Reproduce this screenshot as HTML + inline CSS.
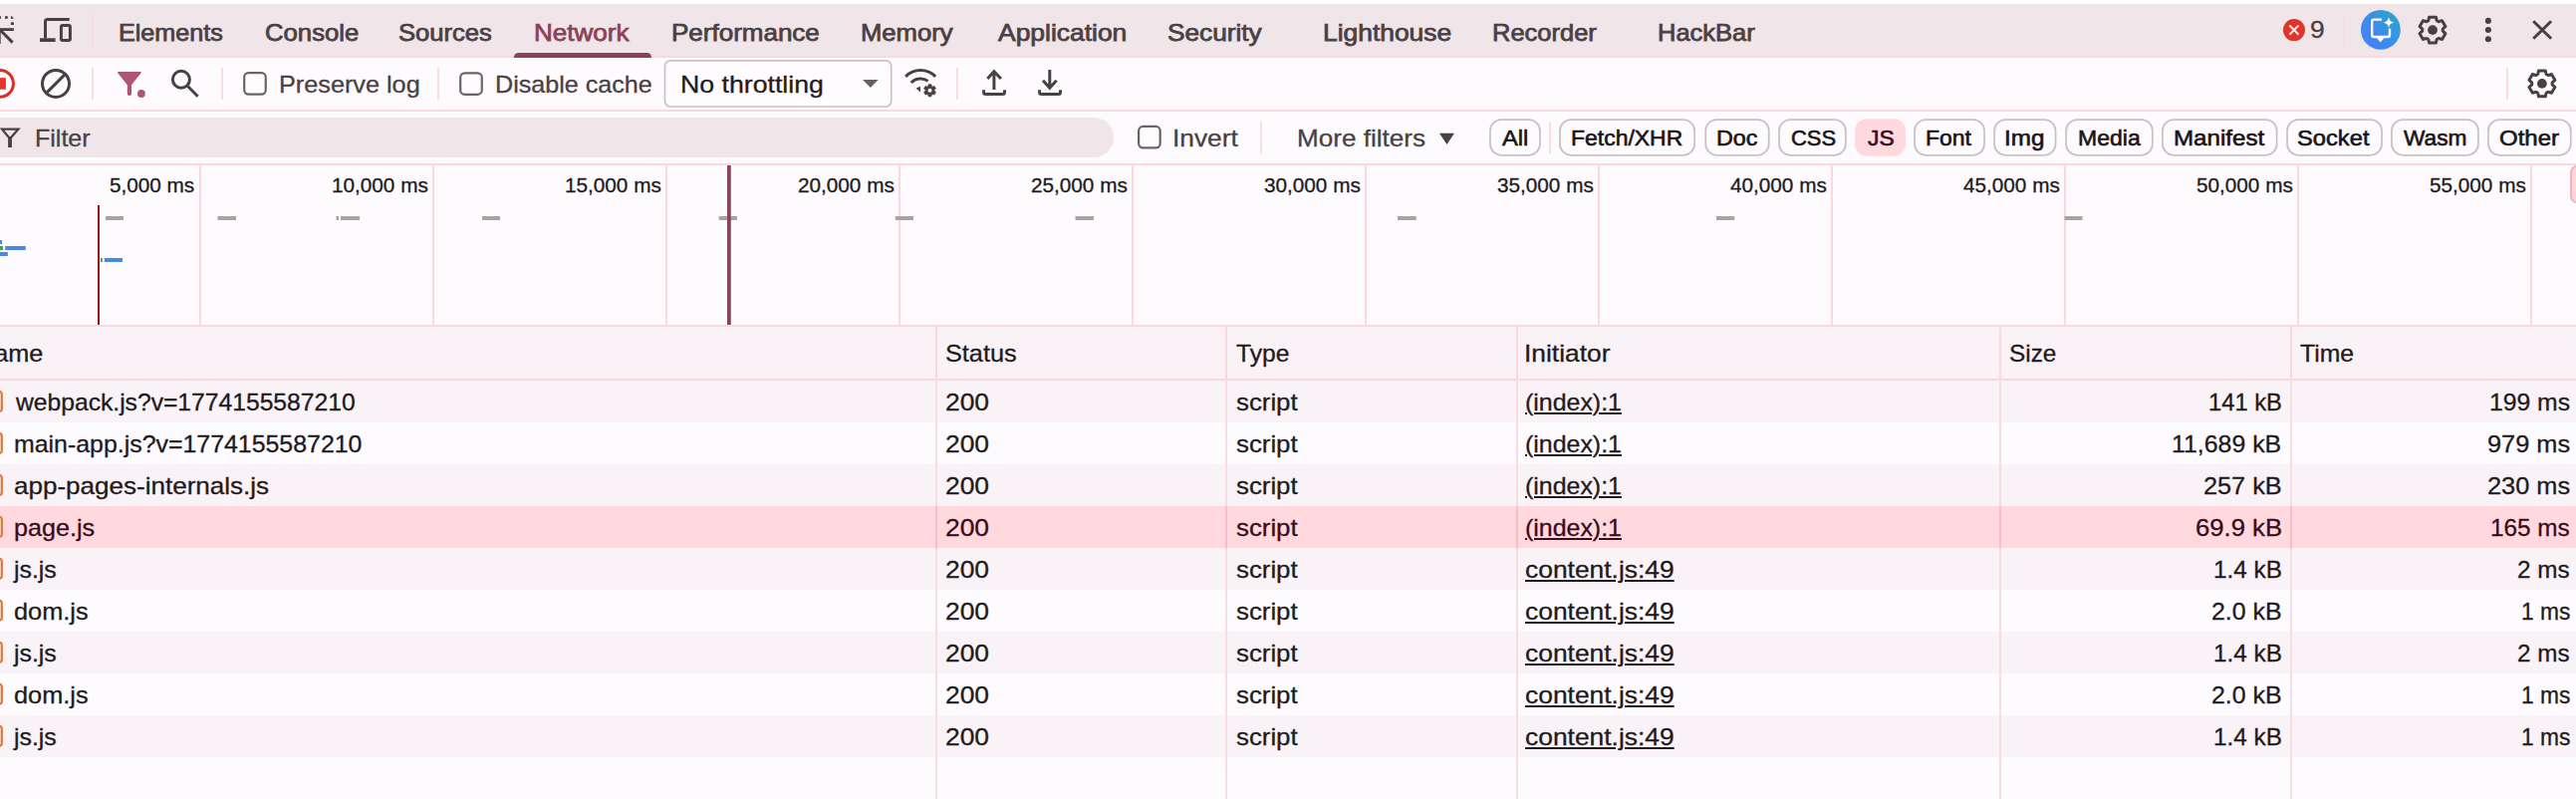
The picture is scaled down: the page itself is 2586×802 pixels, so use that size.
<!DOCTYPE html><html><head><meta charset="utf-8"><title>DevTools</title><style>
html,body{margin:0;padding:0;background:#fefbfe;}body{width:2586px;height:802px;overflow:hidden;position:relative;background:#fefbfe;font-family:"Liberation Sans",sans-serif;}
.a{position:absolute;}.t{position:absolute;white-space:pre;line-height:30px;height:30px;-webkit-text-stroke:0.3px currentColor;}
.med{-webkit-text-stroke:0.75px currentColor;}.med2{-webkit-text-stroke:0.6px currentColor;}
.v{position:absolute;width:2px;background:#fbd7e0;}
.h{position:absolute;left:0;width:2586px;height:2px;background:#fbd7e0;}
.pill{position:absolute;top:119.2px;height:33.7px;border:1.9px solid #c9bfc3;border-radius:12px;box-sizing:content-box;}
.cb{position:absolute;width:19.5px;height:19.5px;border:2px solid #6e6568;border-radius:5px;background:#fefbfe;}
svg{position:absolute;overflow:visible;}
</style></head><body>
<div class="a" style="left:0;top:0;width:2586px;height:4px;background:#fff"></div>
<div class="a" style="left:0;top:4px;width:2586px;height:52px;background:#f0e5e8"></div>
<div class="h" style="top:56px"></div>
<div class="h" style="top:110px"></div>
<div class="h" style="top:164px"></div>
<div class="a" style="left:-30px;top:118px;width:1147.5px;height:40px;border-radius:20px;background:#f0e5e8"></div>
<div class="a" style="left:0;top:328px;width:2586px;height:54px;background:#f9f2f7"></div>
<div class="a" style="left:0;top:382.0px;width:2586px;height:42px;background:#f9f2f7"></div>
<div class="a" style="left:0;top:424.0px;width:2586px;height:42px;background:#fefbfe"></div>
<div class="a" style="left:0;top:466.0px;width:2586px;height:42px;background:#f9f2f7"></div>
<div class="a" style="left:0;top:508.0px;width:2586px;height:42px;background:#ffd9de"></div>
<div class="a" style="left:0;top:550.0px;width:2586px;height:42px;background:#f9f2f7"></div>
<div class="a" style="left:0;top:592.0px;width:2586px;height:42px;background:#fefbfe"></div>
<div class="a" style="left:0;top:634.0px;width:2586px;height:42px;background:#f9f2f7"></div>
<div class="a" style="left:0;top:676.0px;width:2586px;height:42px;background:#fefbfe"></div>
<div class="a" style="left:0;top:718.0px;width:2586px;height:42px;background:#f9f2f7"></div>
<div class="h" style="top:326px"></div>
<div class="h" style="top:380px"></div>
<div class="v" style="left:200px;top:166px;height:160px"></div>
<div class="v" style="left:434px;top:166px;height:160px"></div>
<div class="v" style="left:668px;top:166px;height:160px"></div>
<div class="v" style="left:902px;top:166px;height:160px"></div>
<div class="v" style="left:1136px;top:166px;height:160px"></div>
<div class="v" style="left:1370px;top:166px;height:160px"></div>
<div class="v" style="left:1604px;top:166px;height:160px"></div>
<div class="v" style="left:1838px;top:166px;height:160px"></div>
<div class="v" style="left:2072px;top:166px;height:160px"></div>
<div class="v" style="left:2306px;top:166px;height:160px"></div>
<div class="v" style="left:2540px;top:166px;height:160px"></div>
<div class="v" style="left:939.0px;top:328px;height:474px;background:#f8dce4"></div>
<div class="v" style="left:939.0px;top:328px;height:52px;background:#fad6de"></div>
<div class="v" style="left:939.0px;top:508.0px;height:42px;background:#f7bcc8"></div>
<div class="v" style="left:1230.0px;top:328px;height:474px;background:#f8dce4"></div>
<div class="v" style="left:1230.0px;top:328px;height:52px;background:#fad6de"></div>
<div class="v" style="left:1230.0px;top:508.0px;height:42px;background:#f7bcc8"></div>
<div class="v" style="left:1522.0px;top:328px;height:474px;background:#f8dce4"></div>
<div class="v" style="left:1522.0px;top:328px;height:52px;background:#fad6de"></div>
<div class="v" style="left:1522.0px;top:508.0px;height:42px;background:#f7bcc8"></div>
<div class="v" style="left:2007.0px;top:328px;height:474px;background:#f8dce4"></div>
<div class="v" style="left:2007.0px;top:328px;height:52px;background:#fad6de"></div>
<div class="v" style="left:2007.0px;top:508.0px;height:42px;background:#f7bcc8"></div>
<div class="v" style="left:2299.0px;top:328px;height:474px;background:#f8dce4"></div>
<div class="v" style="left:2299.0px;top:328px;height:52px;background:#fad6de"></div>
<div class="v" style="left:2299.0px;top:508.0px;height:42px;background:#f7bcc8"></div>
<div class="v" style="left:92.0px;top:68.0px;height:32.0px;background:#fcdbe3"></div>
<div class="v" style="left:222.0px;top:68.0px;height:32.0px;background:#fcdbe3"></div>
<div class="v" style="left:439.0px;top:68.0px;height:32.0px;background:#fcdbe3"></div>
<div class="v" style="left:960.0px;top:68.0px;height:32.0px;background:#fcdbe3"></div>
<div class="v" style="left:2516.0px;top:68.0px;height:32.0px;background:#fcdbe3"></div>
<div class="v" style="left:1265.0px;top:122.0px;height:32.0px;background:#fcdbe3"></div>
<div class="v" style="left:1555.0px;top:122.0px;height:32.0px;background:#fcdbe3"></div>
<div class="v" style="left:92.0px;top:14.0px;height:32.0px;background:#f6dce3"></div>
<div class="v" style="left:2352.0px;top:16.0px;height:29.0px;background:#f6dce3"></div>
<div class="a" style="left:516px;top:53.1px;width:137.8px;height:4.9px;border-radius:4.5px 4.5px 0 0;background:#8b4259"></div>
<svg width="2586" height="802" viewBox="0 0 2586 802" style="left:0;top:0">
<rect x="1495.95" y="120.15" width="50.00" height="35.60" rx="11.2" fill="none" stroke="#cbc1c5" stroke-width="1.75"/>
<rect x="1565.95" y="120.15" width="135.20" height="35.60" rx="11.2" fill="none" stroke="#cbc1c5" stroke-width="1.75"/>
<rect x="1712.25" y="120.15" width="63.50" height="35.60" rx="11.2" fill="none" stroke="#cbc1c5" stroke-width="1.75"/>
<rect x="1786.05" y="120.15" width="66.80" height="35.60" rx="11.2" fill="none" stroke="#cbc1c5" stroke-width="1.75"/>
<rect x="1862.00" y="119.20" width="51.00" height="37.50" rx="12" fill="#ffd9de"/>
<rect x="1922.05" y="120.15" width="70.00" height="35.60" rx="11.2" fill="none" stroke="#cbc1c5" stroke-width="1.75"/>
<rect x="2002.15" y="120.15" width="61.40" height="35.60" rx="11.2" fill="none" stroke="#cbc1c5" stroke-width="1.75"/>
<rect x="2074.15" y="120.15" width="86.70" height="35.60" rx="11.2" fill="none" stroke="#cbc1c5" stroke-width="1.75"/>
<rect x="2170.95" y="120.15" width="114.70" height="35.60" rx="11.2" fill="none" stroke="#cbc1c5" stroke-width="1.75"/>
<rect x="2296.05" y="120.15" width="95.00" height="35.60" rx="11.2" fill="none" stroke="#cbc1c5" stroke-width="1.75"/>
<rect x="2400.95" y="120.15" width="87.00" height="35.60" rx="11.2" fill="none" stroke="#cbc1c5" stroke-width="1.75"/>
<rect x="2497.95" y="120.15" width="82.80" height="35.60" rx="11.2" fill="none" stroke="#cbc1c5" stroke-width="1.75"/>
<rect x="245.20" y="73.10" width="21.55" height="21.55" rx="4.4" fill="#fefcfe" stroke="#6b6467" stroke-width="2.2"/>
<rect x="462.20" y="73.30" width="21.55" height="21.55" rx="4.4" fill="#fefcfe" stroke="#6b6467" stroke-width="2.2"/>
<rect x="1143.10" y="126.90" width="21.55" height="21.55" rx="4.4" fill="#fefcfe" stroke="#6b6467" stroke-width="2.2"/>
<rect x="667.5" y="60.8" width="227.2" height="46.2" rx="5.5" fill="#fefcfe" stroke="#cdbfc4" stroke-width="1.7"/>
</svg>
<div class="t med2" style="left:1508.10px;top:124.0px;font-size:22.5px;transform-origin:0 50%;transform:scaleX(1.0539);color:#1a1416">All</div>
<div class="t med2" style="left:1577.38px;top:124.0px;font-size:22.5px;transform-origin:0 50%;transform:scaleX(1.0204);color:#1a1416">Fetch/XHR</div>
<div class="t med2" style="left:1723.26px;top:124.0px;font-size:22.5px;transform-origin:0 50%;transform:scaleX(1.0371);color:#1a1416">Doc</div>
<div class="t med2" style="left:1797.52px;top:124.0px;font-size:22.5px;transform-origin:0 50%;transform:scaleX(0.9761);color:#1a1416">CSS</div>
<div class="t med2" style="left:1875.20px;top:124.0px;font-size:22.5px;transform-origin:0 50%;transform:scaleX(1.0139);color:#3b0a1c">JS</div>
<div class="t med2" style="left:1933.28px;top:124.0px;font-size:22.5px;transform-origin:0 50%;transform:scaleX(1.0208);color:#1a1416">Font</div>
<div class="t med2" style="left:2012.25px;top:124.0px;font-size:22.5px;transform-origin:0 50%;transform:scaleX(1.0773);color:#1a1416">Img</div>
<div class="t med2" style="left:2085.68px;top:124.0px;font-size:22.5px;transform-origin:0 50%;transform:scaleX(1.0236);color:#1a1416">Media</div>
<div class="t med2" style="left:2181.93px;top:124.0px;font-size:22.5px;transform-origin:0 50%;transform:scaleX(1.0733);color:#1a1416">Manifest</div>
<div class="t med2" style="left:2306.25px;top:124.0px;font-size:22.5px;transform-origin:0 50%;transform:scaleX(1.0535);color:#1a1416">Socket</div>
<div class="t med2" style="left:2413.20px;top:124.0px;font-size:22.5px;transform-origin:0 50%;transform:scaleX(1.0102);color:#1a1416">Wasm</div>
<div class="t med2" style="left:2508.53px;top:124.0px;font-size:22.5px;transform-origin:0 50%;transform:scaleX(1.0667);color:#1a1416">Other</div>
<div class="a" style="left:2580px;top:166px;width:14px;height:34px;border-radius:7px;background:#ffd6dc;border:2px solid #f9b0bd"></div>
<div class="t med" style="font-size:23.2px;color:#4a4044;left:118.82px;top:18.00px;transform-origin:0 50%;transform:scaleX(1.0846);">Elements</div>
<div class="t med" style="font-size:23.2px;color:#4a4044;left:265.69px;top:18.00px;transform-origin:0 50%;transform:scaleX(1.1085);">Console</div>
<div class="t med" style="font-size:23.2px;color:#4a4044;left:399.90px;top:18.00px;transform-origin:0 50%;transform:scaleX(1.1022);">Sources</div>
<div class="t med" style="font-size:23.2px;color:#4a4044;left:674.18px;top:18.00px;transform-origin:0 50%;transform:scaleX(1.1212);">Performance</div>
<div class="t med" style="font-size:23.2px;color:#4a4044;left:864.30px;top:18.00px;transform-origin:0 50%;transform:scaleX(1.1041);">Memory</div>
<div class="t med" style="font-size:23.2px;color:#4a4044;left:1001.50px;top:18.00px;transform-origin:0 50%;transform:scaleX(1.1400);">Application</div>
<div class="t med" style="font-size:23.2px;color:#4a4044;left:1171.87px;top:18.00px;transform-origin:0 50%;transform:scaleX(1.1303);">Security</div>
<div class="t med" style="font-size:23.2px;color:#4a4044;left:1327.86px;top:18.00px;transform-origin:0 50%;transform:scaleX(1.1384);">Lighthouse</div>
<div class="t med" style="font-size:23.2px;color:#4a4044;left:1497.90px;top:18.00px;transform-origin:0 50%;transform:scaleX(1.0989);">Recorder</div>
<div class="t med" style="font-size:23.2px;color:#4a4044;left:1663.50px;top:18.00px;transform-origin:0 50%;transform:scaleX(1.0988);">HackBar</div>
<div class="t med" style="font-size:23.2px;color:#8b4259;left:536.28px;top:18.00px;transform-origin:0 50%;transform:scaleX(1.1226);">Network</div>
<div class="t " style="font-size:24px;color:#4a4044;left:2318.90px;top:15.00px;transform-origin:0 50%;transform:scaleX(1.1000);">9</div>
<div class="t " style="font-size:24px;color:#4a4044;left:279.75px;top:70.00px;transform-origin:0 50%;transform:scaleX(1.0515);">Preserve log</div>
<div class="t " style="font-size:24px;color:#4a4044;left:497.25px;top:70.00px;transform-origin:0 50%;transform:scaleX(1.0462);">Disable cache</div>
<div class="t " style="font-size:24px;color:#1f1a1c;left:683.49px;top:70.00px;transform-origin:0 50%;transform:scaleX(1.1114);">No throttling</div>
<div class="t " style="font-size:24px;color:#4a4044;left:34.96px;top:124.00px;transform-origin:0 50%;transform:scaleX(1.0432);">Filter</div>
<div class="t " style="font-size:24px;color:#4a4044;left:1176.56px;top:124.00px;transform-origin:0 50%;transform:scaleX(1.0967);">Invert</div>
<div class="t " style="font-size:24px;color:#4a4044;left:1301.91px;top:124.00px;transform-origin:0 50%;transform:scaleX(1.0876);">More filters</div>
<div class="t " style="font-size:20px;color:#1f1a1c;left:110.17px;top:171.00px;transform-origin:0 50%;transform:scaleX(1.0360);">5,000 ms</div>
<div class="t " style="font-size:20px;color:#1f1a1c;left:332.65px;top:171.00px;transform-origin:0 50%;transform:scaleX(1.0360);">10,000 ms</div>
<div class="t " style="font-size:20px;color:#1f1a1c;left:566.65px;top:171.00px;transform-origin:0 50%;transform:scaleX(1.0360);">15,000 ms</div>
<div class="t " style="font-size:20px;color:#1f1a1c;left:800.65px;top:171.00px;transform-origin:0 50%;transform:scaleX(1.0360);">20,000 ms</div>
<div class="t " style="font-size:20px;color:#1f1a1c;left:1034.65px;top:171.00px;transform-origin:0 50%;transform:scaleX(1.0360);">25,000 ms</div>
<div class="t " style="font-size:20px;color:#1f1a1c;left:1268.65px;top:171.00px;transform-origin:0 50%;transform:scaleX(1.0360);">30,000 ms</div>
<div class="t " style="font-size:20px;color:#1f1a1c;left:1502.65px;top:171.00px;transform-origin:0 50%;transform:scaleX(1.0360);">35,000 ms</div>
<div class="t " style="font-size:20px;color:#1f1a1c;left:1736.65px;top:171.00px;transform-origin:0 50%;transform:scaleX(1.0360);">40,000 ms</div>
<div class="t " style="font-size:20px;color:#1f1a1c;left:1970.65px;top:171.00px;transform-origin:0 50%;transform:scaleX(1.0360);">45,000 ms</div>
<div class="t " style="font-size:20px;color:#1f1a1c;left:2204.65px;top:171.00px;transform-origin:0 50%;transform:scaleX(1.0360);">50,000 ms</div>
<div class="t " style="font-size:20px;color:#1f1a1c;left:2438.65px;top:171.00px;transform-origin:0 50%;transform:scaleX(1.0360);">55,000 ms</div>
<div class="t " style="font-size:24px;color:#1f1a1c;left:-24.05px;top:340.00px;transform-origin:0 50%;transform:scaleX(1.0531);">Name</div>
<div class="t " style="font-size:24px;color:#1f1a1c;left:948.95px;top:340.00px;transform-origin:0 50%;transform:scaleX(1.0516);">Status</div>
<div class="t " style="font-size:24px;color:#1f1a1c;left:1241.00px;top:340.00px;transform-origin:0 50%;transform:scaleX(1.0255);">Type</div>
<div class="t " style="font-size:24px;color:#1f1a1c;left:1530.30px;top:340.00px;transform-origin:0 50%;transform:scaleX(1.0983);">Initiator</div>
<div class="t " style="font-size:24px;color:#1f1a1c;left:2016.74px;top:340.00px;transform-origin:0 50%;transform:scaleX(1.0146);">Size</div>
<div class="t " style="font-size:24px;color:#1f1a1c;left:2309.00px;top:340.00px;transform-origin:0 50%;transform:scaleX(1.0318);">Time</div>
<div class="t " style="font-size:24px;color:#1f1a1c;left:16.03px;top:389.00px;transform-origin:0 50%;transform:scaleX(1.0271);">webpack.js?v=1774155587210</div>
<div class="t " style="font-size:24px;color:#1f1a1c;left:948.90px;top:389.00px;transform-origin:0 50%;transform:scaleX(1.0983);">200</div>
<div class="t " style="font-size:24px;color:#1f1a1c;left:1241.00px;top:389.00px;transform-origin:0 50%;transform:scaleX(1.0750);">script</div>
<div class="t " style="font-size:24px;color:#1f1a1c;text-decoration:underline;text-decoration-thickness:2px;text-underline-offset:2px;left:1531.46px;top:389.00px;transform-origin:0 50%;transform:scaleX(1.0377);">(index):1</div>
<div class="t " style="font-size:24px;color:#1f1a1c;left:2216.76px;top:389.00px;transform-origin:0 50%;transform:scaleX(0.9882);">141 kB</div>
<div class="t " style="font-size:24px;color:#1f1a1c;left:2498.97px;top:389.00px;transform-origin:0 50%;transform:scaleX(1.0296);">199 ms</div>
<div class="t " style="font-size:24px;color:#1f1a1c;left:13.96px;top:431.00px;transform-origin:0 50%;transform:scaleX(1.0370);">main-app.js?v=1774155587210</div>
<div class="t " style="font-size:24px;color:#1f1a1c;left:948.90px;top:431.00px;transform-origin:0 50%;transform:scaleX(1.0983);">200</div>
<div class="t " style="font-size:24px;color:#1f1a1c;left:1241.00px;top:431.00px;transform-origin:0 50%;transform:scaleX(1.0750);">script</div>
<div class="t " style="font-size:24px;color:#1f1a1c;text-decoration:underline;text-decoration-thickness:2px;text-underline-offset:2px;left:1531.46px;top:431.00px;transform-origin:0 50%;transform:scaleX(1.0377);">(index):1</div>
<div class="t " style="font-size:24px;color:#1f1a1c;left:2180.46px;top:431.00px;transform-origin:0 50%;transform:scaleX(1.0365);">11,689 kB</div>
<div class="t " style="font-size:24px;color:#1f1a1c;left:2496.94px;top:431.00px;transform-origin:0 50%;transform:scaleX(1.0553);">979 ms</div>
<div class="t " style="font-size:24px;color:#1f1a1c;left:13.92px;top:473.00px;transform-origin:0 50%;transform:scaleX(1.0845);">app-pages-internals.js</div>
<div class="t " style="font-size:24px;color:#1f1a1c;left:948.90px;top:473.00px;transform-origin:0 50%;transform:scaleX(1.0983);">200</div>
<div class="t " style="font-size:24px;color:#1f1a1c;left:1241.00px;top:473.00px;transform-origin:0 50%;transform:scaleX(1.0750);">script</div>
<div class="t " style="font-size:24px;color:#1f1a1c;text-decoration:underline;text-decoration-thickness:2px;text-underline-offset:2px;left:1531.46px;top:473.00px;transform-origin:0 50%;transform:scaleX(1.0377);">(index):1</div>
<div class="t " style="font-size:24px;color:#1f1a1c;left:2211.95px;top:473.00px;transform-origin:0 50%;transform:scaleX(1.0535);">257 kB</div>
<div class="t " style="font-size:24px;color:#1f1a1c;left:2496.94px;top:473.00px;transform-origin:0 50%;transform:scaleX(1.0553);">230 ms</div>
<div class="t " style="font-size:24px;color:#3b0a1c;left:13.95px;top:515.00px;transform-origin:0 50%;transform:scaleX(1.0472);">page.js</div>
<div class="t " style="font-size:24px;color:#3b0a1c;left:948.90px;top:515.00px;transform-origin:0 50%;transform:scaleX(1.0983);">200</div>
<div class="t " style="font-size:24px;color:#3b0a1c;left:1241.00px;top:515.00px;transform-origin:0 50%;transform:scaleX(1.0750);">script</div>
<div class="t " style="font-size:24px;color:#3b0a1c;text-decoration:underline;text-decoration-thickness:2px;text-underline-offset:2px;left:1531.46px;top:515.00px;transform-origin:0 50%;transform:scaleX(1.0377);">(index):1</div>
<div class="t " style="font-size:24px;color:#3b0a1c;left:2203.63px;top:515.00px;transform-origin:0 50%;transform:scaleX(1.0696);">69.9 kB</div>
<div class="t " style="font-size:24px;color:#3b0a1c;left:2500.29px;top:515.00px;transform-origin:0 50%;transform:scaleX(1.0128);">165 ms</div>
<div class="t " style="font-size:24px;color:#1f1a1c;left:14.43px;top:557.00px;transform-origin:0 50%;transform:scaleX(1.0347);">js.js</div>
<div class="t " style="font-size:24px;color:#1f1a1c;left:948.90px;top:557.00px;transform-origin:0 50%;transform:scaleX(1.0983);">200</div>
<div class="t " style="font-size:24px;color:#1f1a1c;left:1241.00px;top:557.00px;transform-origin:0 50%;transform:scaleX(1.0750);">script</div>
<div class="t " style="font-size:24px;color:#1f1a1c;text-decoration:underline;text-decoration-thickness:2px;text-underline-offset:2px;left:1531.40px;top:557.00px;transform-origin:0 50%;transform:scaleX(1.1002);">content.js:49</div>
<div class="t " style="font-size:24px;color:#1f1a1c;left:2221.79px;top:557.00px;transform-origin:0 50%;transform:scaleX(1.0116);">1.4 kB</div>
<div class="t " style="font-size:24px;color:#1f1a1c;left:2527.49px;top:557.00px;transform-origin:0 50%;transform:scaleX(1.0096);">2 ms</div>
<div class="t " style="font-size:24px;color:#1f1a1c;left:13.85px;top:599.00px;transform-origin:0 50%;transform:scaleX(1.0547);">dom.js</div>
<div class="t " style="font-size:24px;color:#1f1a1c;left:948.90px;top:599.00px;transform-origin:0 50%;transform:scaleX(1.0983);">200</div>
<div class="t " style="font-size:24px;color:#1f1a1c;left:1241.00px;top:599.00px;transform-origin:0 50%;transform:scaleX(1.0750);">script</div>
<div class="t " style="font-size:24px;color:#1f1a1c;text-decoration:underline;text-decoration-thickness:2px;text-underline-offset:2px;left:1531.40px;top:599.00px;transform-origin:0 50%;transform:scaleX(1.1002);">content.js:49</div>
<div class="t " style="font-size:24px;color:#1f1a1c;left:2219.96px;top:599.00px;transform-origin:0 50%;transform:scaleX(1.0389);">2.0 kB</div>
<div class="t " style="font-size:24px;color:#1f1a1c;left:2530.65px;top:599.00px;transform-origin:0 50%;transform:scaleX(0.9489);">1 ms</div>
<div class="t " style="font-size:24px;color:#1f1a1c;left:14.43px;top:641.00px;transform-origin:0 50%;transform:scaleX(1.0347);">js.js</div>
<div class="t " style="font-size:24px;color:#1f1a1c;left:948.90px;top:641.00px;transform-origin:0 50%;transform:scaleX(1.0983);">200</div>
<div class="t " style="font-size:24px;color:#1f1a1c;left:1241.00px;top:641.00px;transform-origin:0 50%;transform:scaleX(1.0750);">script</div>
<div class="t " style="font-size:24px;color:#1f1a1c;text-decoration:underline;text-decoration-thickness:2px;text-underline-offset:2px;left:1531.40px;top:641.00px;transform-origin:0 50%;transform:scaleX(1.1002);">content.js:49</div>
<div class="t " style="font-size:24px;color:#1f1a1c;left:2221.79px;top:641.00px;transform-origin:0 50%;transform:scaleX(1.0116);">1.4 kB</div>
<div class="t " style="font-size:24px;color:#1f1a1c;left:2527.49px;top:641.00px;transform-origin:0 50%;transform:scaleX(1.0096);">2 ms</div>
<div class="t " style="font-size:24px;color:#1f1a1c;left:13.85px;top:683.00px;transform-origin:0 50%;transform:scaleX(1.0547);">dom.js</div>
<div class="t " style="font-size:24px;color:#1f1a1c;left:948.90px;top:683.00px;transform-origin:0 50%;transform:scaleX(1.0983);">200</div>
<div class="t " style="font-size:24px;color:#1f1a1c;left:1241.00px;top:683.00px;transform-origin:0 50%;transform:scaleX(1.0750);">script</div>
<div class="t " style="font-size:24px;color:#1f1a1c;text-decoration:underline;text-decoration-thickness:2px;text-underline-offset:2px;left:1531.40px;top:683.00px;transform-origin:0 50%;transform:scaleX(1.1002);">content.js:49</div>
<div class="t " style="font-size:24px;color:#1f1a1c;left:2219.96px;top:683.00px;transform-origin:0 50%;transform:scaleX(1.0389);">2.0 kB</div>
<div class="t " style="font-size:24px;color:#1f1a1c;left:2530.65px;top:683.00px;transform-origin:0 50%;transform:scaleX(0.9489);">1 ms</div>
<div class="t " style="font-size:24px;color:#1f1a1c;left:14.43px;top:725.00px;transform-origin:0 50%;transform:scaleX(1.0347);">js.js</div>
<div class="t " style="font-size:24px;color:#1f1a1c;left:948.90px;top:725.00px;transform-origin:0 50%;transform:scaleX(1.0983);">200</div>
<div class="t " style="font-size:24px;color:#1f1a1c;left:1241.00px;top:725.00px;transform-origin:0 50%;transform:scaleX(1.0750);">script</div>
<div class="t " style="font-size:24px;color:#1f1a1c;text-decoration:underline;text-decoration-thickness:2px;text-underline-offset:2px;left:1531.40px;top:725.00px;transform-origin:0 50%;transform:scaleX(1.1002);">content.js:49</div>
<div class="t " style="font-size:24px;color:#1f1a1c;left:2221.79px;top:725.00px;transform-origin:0 50%;transform:scaleX(1.0116);">1.4 kB</div>
<div class="t " style="font-size:24px;color:#1f1a1c;left:2530.65px;top:725.00px;transform-origin:0 50%;transform:scaleX(0.9489);">1 ms</div>
<!--ICONS-->
<svg width="2586" height="802" viewBox="0 0 2586 802" style="left:0;top:0">
<g fill="#4a4044">
<rect x="-1" y="16.2" width="2" height="2.6"/><rect x="5" y="16.2" width="2.8" height="2.6"/><path d="M10.9 18.8 L10.9 16.2 L12 16.2 L13.9 18.8 Z"/><rect x="10.9" y="22.3" width="3" height="2.7"/>
<rect x="-2" y="28.2" width="15.9" height="2.8"/><rect x="-2" y="28.2" width="2.7" height="15.8"/>
</g>
<path d="M0 30 L12.6 42.6" stroke="#4a4044" stroke-width="3" fill="none"/>
<path d="M69.7 19.5 L47.5 19.5 Q45.5 19.5 45.5 21.5 L45.5 38.5" stroke="#4a4044" stroke-width="3" fill="none"/>
<rect x="40" y="38.3" width="15.6" height="3.7" fill="#4a4044"/>
<rect x="61.4" y="25.6" width="9" height="14.9" rx="1.5" stroke="#4a4044" stroke-width="3" fill="none"/>
<circle cx="0" cy="83.9" r="13.4" fill="none" stroke="#d93025" stroke-width="3"/><rect x="-6" y="78.1" width="11.9" height="11.6" fill="#e53528"/>
<circle cx="56" cy="83.9" r="13.5" fill="none" stroke="#4a4044" stroke-width="3"/><path d="M46.5 93.4 L65.5 74.4" stroke="#4a4044" stroke-width="3"/>
<path d="M118.6 72 L141.2 72 Q142.3 72.6 141.4 73.6 L132 85.2 L132 94 Q132 96 129.9 96 Q127.8 96 127.8 94 L127.8 85.2 L118.4 73.6 Q117.5 72.6 118.6 72 Z" fill="#ad5571"/><circle cx="141.9" cy="94" r="3.9" fill="#ad5571"/>
<circle cx="181.9" cy="79.8" r="8.5" fill="none" stroke="#4a4044" stroke-width="3"/><path d="M188 86 L198.6 96.8" stroke="#4a4044" stroke-width="3" stroke-linecap="butt"/>
<path d="M909.1 76.9 A 21 21 0 0 1 939.1 76.9" fill="none" stroke="#4a4044" stroke-width="3"/>
<path d="M914.7 83 A 13 13 0 0 1 931.6 81.4" fill="none" stroke="#4a4044" stroke-width="3"/>
<path d="M919.5 88.5 L924 86.8 L924 92.4 Z" fill="#4a4044"/>
<path d="M935.50 87.34 L934.89 84.76 L932.11 84.76 L931.50 87.34 L928.97 86.57 L927.57 88.99 L929.50 90.80 L927.57 92.61 L928.97 95.03 L931.50 94.26 L932.11 96.84 L934.89 96.84 L935.50 94.26 L938.03 95.03 L939.43 92.61 L937.50 90.80 L939.43 88.99 L938.03 86.57 Z" fill="#4a4044" stroke="#4a4044" stroke-width="0.8" stroke-linejoin="round"/><circle cx="933.5" cy="90.8" r="2" fill="#fefbfe"/>
<path d="M997.9 90 L997.9 71.4 M991.3 79 L997.9 71.8 L1004.9 79" fill="none" stroke="#4a4044" stroke-width="3" stroke-linejoin="miter"/>
<path d="M987.5 90.3 L987.5 92.4 Q987.5 94.4 989.5 94.4 L1006.5 94.4 Q1008.5 94.4 1008.5 92.4 L1008.5 90.3" fill="none" stroke="#4a4044" stroke-width="3"/>
<path d="M1053.8 70 L1053.8 88.6 M1047 80.8 L1053.8 88.2 L1060.6 80.8" fill="none" stroke="#4a4044" stroke-width="3" stroke-linejoin="miter"/>
<path d="M1043.5 90.3 L1043.5 92.4 Q1043.5 94.4 1045.5 94.4 L1062.5 94.4 Q1064.5 94.4 1064.5 92.4 L1064.5 90.3" fill="none" stroke="#4a4044" stroke-width="3"/>
<circle cx="2303" cy="30.1" r="11" fill="#e0342b"/><path d="M2298.4 25.5 L2307.6 34.7 M2307.6 25.5 L2298.4 34.7" stroke="#fde6e6" stroke-width="2"/>
<defs><linearGradient id="g1" x1="0" y1="1" x2="1" y2="0"><stop offset="0.3" stop-color="#4285f4"/><stop offset="1" stop-color="#2aa8c4"/></linearGradient></defs>
<circle cx="2389.9" cy="29.9" r="19.9" fill="url(#g1)"/>
<path d="M2391 19.6 L2383.2 19.6 Q2381.2 19.6 2381.2 21.6 L2381.2 35 Q2381.2 37 2383.2 37 L2397 37 Q2399 37 2399 35 L2399 28.8" fill="none" stroke="#fff" stroke-width="2.4" stroke-linejoin="miter"/>
<path d="M2385.5 37.6 L2389.7 42.6 L2393.9 37.6 Z" fill="#fff"/>
<path d="M2398 17.2 Q2398.8 21.8 2403.4 22.6 Q2398.8 23.4 2398 28 Q2397.2 23.4 2392.6 22.6 Q2397.2 21.8 2398 17.2 Z" fill="#fff"/>
<path d="M2446.19 20.69 L2445.38 17.13 L2438.62 17.13 L2437.81 20.69 L2435.95 21.77 L2432.46 20.69 L2429.08 26.54 L2431.76 29.02 L2431.76 31.18 L2429.08 33.66 L2432.46 39.51 L2435.95 38.43 L2437.81 39.51 L2438.62 43.07 L2445.38 43.07 L2446.19 39.51 L2448.05 38.43 L2451.54 39.51 L2454.92 33.66 L2452.24 31.18 L2452.24 29.02 L2454.92 26.54 L2451.54 20.69 L2448.05 21.77 Z" fill="none" stroke="#4a4044" stroke-width="3" stroke-linejoin="round"/><circle cx="2442" cy="30.1" r="4.9" fill="#4a4044"/>
<path d="M2556.09 74.49 L2555.28 70.93 L2548.52 70.93 L2547.71 74.49 L2545.85 75.57 L2542.36 74.49 L2538.98 80.34 L2541.66 82.82 L2541.66 84.98 L2538.98 87.46 L2542.36 93.31 L2545.85 92.23 L2547.71 93.31 L2548.52 96.87 L2555.28 96.87 L2556.09 93.31 L2557.95 92.23 L2561.44 93.31 L2564.82 87.46 L2562.14 84.98 L2562.14 82.82 L2564.82 80.34 L2561.44 74.49 L2557.95 75.57 Z" fill="none" stroke="#4a4044" stroke-width="3" stroke-linejoin="round"/><circle cx="2551.9" cy="83.9" r="4.9" fill="#4a4044"/>
<circle cx="2497.9" cy="20.9" r="3.05" fill="#4a4044"/>
<circle cx="2497.9" cy="30" r="3.05" fill="#4a4044"/>
<circle cx="2497.9" cy="39.2" r="3.05" fill="#4a4044"/>
<path d="M2543.2 21.2 L2561.1 38.8 M2561.1 21.2 L2543.2 38.8" stroke="#4a4044" stroke-width="3"/>
<path d="M2 129.7 L18.3 129.7 L10 139.3 Z" fill="none" stroke="#4a4044" stroke-width="2.3" stroke-linejoin="miter"/><rect x="8.1" y="137" width="3.8" height="11" fill="#4a4044"/>
<path d="M866 80 L881.7 80 L873.85 88 Z" fill="#6a6064"/>
<path d="M1445 133.75 L1460 133.75 L1452.5 145 Z" fill="#4a4044"/>
<rect x="106" y="217" width="18" height="4" fill="#a8a2a4"/>
<rect x="218.5" y="217" width="18.5" height="4" fill="#a8a2a4"/>
<rect x="342" y="217" width="19" height="4" fill="#a8a2a4"/>
<rect x="484" y="217" width="18" height="4" fill="#a8a2a4"/>
<rect x="721.75" y="217" width="18.25" height="4" fill="#a8a2a4"/>
<rect x="898.75" y="217" width="18.25" height="4" fill="#a8a2a4"/>
<rect x="1079.5" y="217" width="18.5" height="4" fill="#a8a2a4"/>
<rect x="1403" y="217" width="18.75" height="4" fill="#a8a2a4"/>
<rect x="1723" y="217" width="18.25" height="4" fill="#a8a2a4"/>
<rect x="2072.5" y="217" width="18" height="4" fill="#a8a2a4"/>
<rect x="337.5" y="217" width="2.5" height="4" fill="#a8a2a4"/>
<rect x="98" y="206" width="2" height="120" fill="#a50f14"/>
<rect x="730" y="166" width="3.75" height="160" fill="#8b4259"/>
<rect x="5.2" y="247" width="20.6" height="4" fill="#4a86e8"/><rect x="0" y="253" width="7.8" height="4" fill="#4a86e8"/><rect x="0" y="247" width="3" height="4" fill="#34a853"/><rect x="0" y="241" width="2" height="4" fill="#4a86e8"/>
<rect x="104.8" y="259" width="18.2" height="4" fill="#4a86e8"/><rect x="101" y="259" width="1.8" height="4" fill="#34a853"/>
<rect x="-16" y="392.9" width="17.85" height="19.9" rx="2.6" fill="#fbe3d6" stroke="#e0763a" stroke-width="2.1"/>
<rect x="-16" y="434.9" width="17.85" height="19.9" rx="2.6" fill="#fbe3d6" stroke="#e0763a" stroke-width="2.1"/>
<rect x="-16" y="476.9" width="17.85" height="19.9" rx="2.6" fill="#fbe3d6" stroke="#e0763a" stroke-width="2.1"/>
<rect x="-16" y="518.8" width="17.85" height="19.9" rx="2.6" fill="#fbe3d6" stroke="#e0763a" stroke-width="2.1"/>
<rect x="-16" y="560.8" width="17.85" height="19.9" rx="2.6" fill="#fbe3d6" stroke="#e0763a" stroke-width="2.1"/>
<rect x="-16" y="602.8" width="17.85" height="19.9" rx="2.6" fill="#fbe3d6" stroke="#e0763a" stroke-width="2.1"/>
<rect x="-16" y="644.8" width="17.85" height="19.9" rx="2.6" fill="#fbe3d6" stroke="#e0763a" stroke-width="2.1"/>
<rect x="-16" y="686.8" width="17.85" height="19.9" rx="2.6" fill="#fbe3d6" stroke="#e0763a" stroke-width="2.1"/>
<rect x="-16" y="728.8" width="17.85" height="19.9" rx="2.6" fill="#fbe3d6" stroke="#e0763a" stroke-width="2.1"/>
</svg>
</body></html>
